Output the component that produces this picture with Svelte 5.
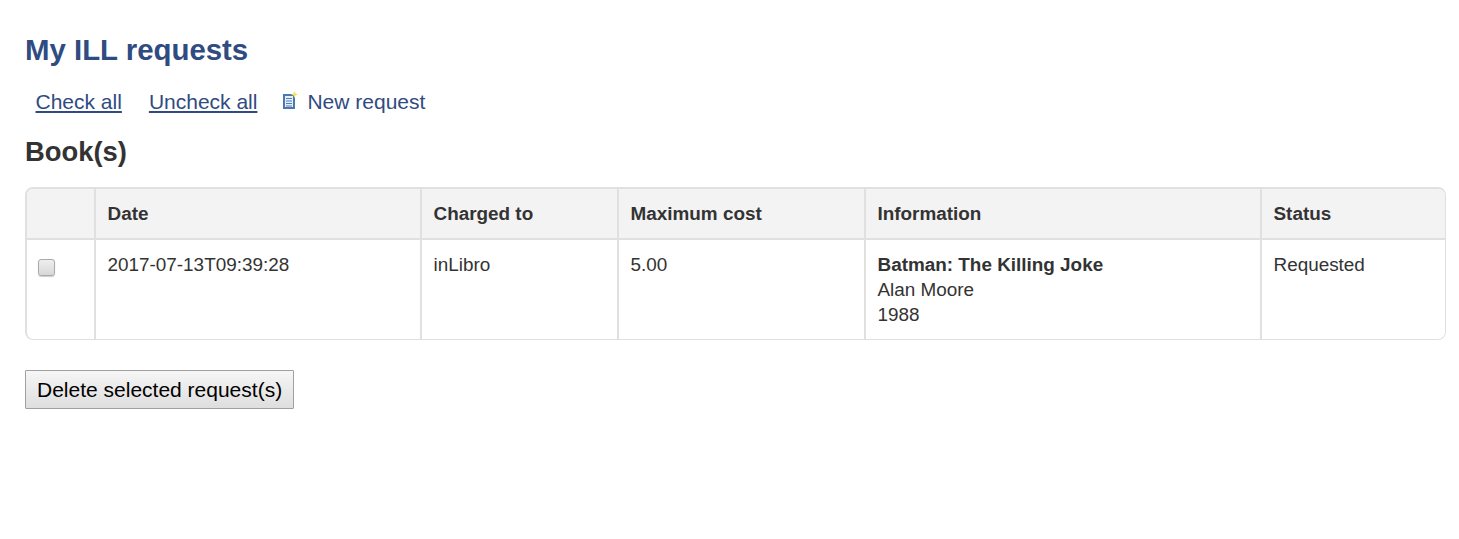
<script>
  const columns = ["", "Date", "Charged to", "Maximum cost", "Information", "Status"];
  const widths = [68, 326, 197, 247, 396, 184];
</script>

<main class="page">
  <h1>My ILL requests</h1>

  <div class="actions">
    <a href="#check" class="select-link">Check all</a>
    <a href="#uncheck" class="select-link">Uncheck all</a>
    <a href="#new" class="new-link">
      <svg width="16" height="20" viewBox="0 0 16 20" aria-hidden="true">
        <rect x="2" y="5" width="10" height="13" fill="#e6edf6" stroke="#4a78b2" stroke-width="2" />
        <path d="M4 8.500h6M4 11h6M4 13.500h6M4 16h6" stroke="#4f7fb8" stroke-width="1" />
        <path d="M12.500 1l1 2.500 2.500 1-2.500 1-1 2.500-1-2.500-2.500-1 2.500-1z" fill="#f2e25c" />
      </svg>
      <span>New request</span>
    </a>
  </div>

  <h2>Book(s)</h2>

  <div class="table-wrap">
    <table>
      <colgroup>
        {#each widths as w}
          <col style="width: {w}px" />
        {/each}
      </colgroup>
      <thead>
        <tr>
          {#each columns as c}
            <th>{c}</th>
          {/each}
        </tr>
      </thead>
      <tbody>
        <tr>
          <td><input type="checkbox" /></td>
          <td>2017-07-13T09:39:28</td>
          <td>inLibro</td>
          <td>5.00</td>
          <td><strong>Batman: The Killing Joke</strong><br />Alan Moore<br />1988</td>
          <td>Requested</td>
        </tr>
      </tbody>
    </table>
  </div>

  <button type="button">Delete selected request(s)</button>
</main>

<style>
  :global(body) {
    margin: 0;
    background: #fff;
  }

  .page {
    padding: 33px 13px 0 25px;
    font-family: "Liberation Sans", Arial, sans-serif;
    font-size: 18.9px;
    line-height: 25px;
    color: #333;
  }

  h1 {
    margin: 0;
    font-size: 29.4px;
    line-height: 34px;
    font-weight: bold;
    color: #2f4b82;
  }

  .actions {
    display: flex;
    align-items: center;
    gap: 27px;
    margin: 20px 0 0 10.500px;
    font-size: 21px;
    height: 28px;
  }

  .actions a {
    color: #2f4b82;
    text-decoration: none;
  }

  .actions a.select-link {
    text-decoration: underline;
    text-decoration-thickness: 2px;
    text-underline-offset: 2px;
  }

  .new-link {
    display: flex;
    align-items: center;
    gap: 9px;
    margin-left: -2px;
  }

  .new-link svg {
    margin-top: -3px;
  }

  h2 {
    margin: 21px 0 0;
    font-size: 27.4px;
    line-height: 32px;
    font-weight: bold;
    color: #333;
  }

  .table-wrap {
    box-sizing: border-box;
    width: 1421px;
    margin-top: 19px;
    border: 1px solid #e0e0e0;
    border-top-width: 2px;
    border-left-width: 2px;
    border-radius: 8px;
    overflow: hidden;
  }

  table {
    border-collapse: collapse;
    table-layout: fixed;
    width: 100%;
  }

  th,
  td {
    padding: 12px 12px 12px 11.500px;
    text-align: left;
    vertical-align: top;
    border-left: 2px solid #e0e0e0;
  }

  th:first-child,
  td:first-child {
    border-left: none;
  }

  th {
    height: 25px;
    background: #f3f3f3;
    border-bottom: 2px solid #e0e0e0;
    font-weight: bold;
  }

  input[type="checkbox"] {
    appearance: none;
    display: block;
    width: 17px;
    height: 17px;
    margin: 7px 0 0 -0.500px;
    border: 1px solid #aaa;
    border-radius: 3px;
    background: linear-gradient(#eee, #d8d8d8);
    box-shadow: 0 1px 1px rgba(0, 0, 0, 0.2);
  }

  button {
    display: block;
    margin-top: 30px;
    height: 39px;
    padding: 0 11px;
    font-family: inherit;
    font-size: 21px;
    color: #000;
    border: 1px solid #a0a0a0;
    border-radius: 1px;
    background: linear-gradient(#f6f6f6, #dedede);
  }
</style>
